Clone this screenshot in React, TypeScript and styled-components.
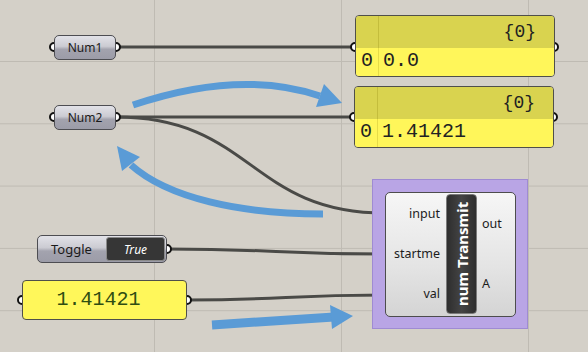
import React from 'react';
import styled, { createGlobalStyle } from 'styled-components';

const GlobalStyle = createGlobalStyle`
  html, body {
    margin: 0;
    padding: 0;
    background: #d4d0c8;
  }
  body {
    font-family: 'Noto Sans', 'Open Sans', sans-serif;
  }
`;

const Canvas = styled.div`
  position: relative;
  width: 588px;
  height: 352px;
  overflow: hidden;
  background-color: #d4d0c8;
  background-image:
    linear-gradient(to right, #bfbbb3 1px, transparent 1px),
    linear-gradient(to bottom, #bfbbb3 1px, transparent 1px);
  background-size: 187px 100%, 100% 62.3px;
  background-position: -33px 0, 0 -1.3px;
`;

const Layer = styled.svg`
  position: absolute;
  left: 0;
  top: 0;
`;

const Node = styled.div<{ $x: number; $y: number }>`
  position: absolute;
  left: ${({ $x }) => $x}px;
  top: ${({ $y }) => $y}px;
  box-sizing: border-box;
`;

const Param = styled.div`
  width: 62px;
  height: 25px;
  box-sizing: border-box;
  border: 1px solid #4d4d52;
  border-radius: 5px;
  background: linear-gradient(#e2e2e8 0%, #cbcbd2 45%, #a3a3ae 58%, #9c9ca8 100%);
  display: flex;
  align-items: center;
  justify-content: center;
  font-size: 12px;
  color: #1a1a1a;
`;

const Panel = styled.div`
  width: 200px;
  height: 62px;
  box-sizing: border-box;
  border: 1px solid #4f4f4a;
  border-radius: 4px;
  overflow: hidden;
  display: grid;
  grid-template-rows: 32px 1fr;
  grid-template-columns: 23px 1fr;
  font-family: 'Liberation Mono', 'Courier New', monospace;
  color: #222;
`;

const PanelHead = styled.div<{ $index?: boolean }>`
  background: #d9d34f;
  border-right: ${({ $index }) => ($index ? '1px solid #c4bd3c' : 'none')};
  display: flex;
  align-items: center;
  justify-content: flex-end;
  padding-right: 18px;
  font-size: 18px;
`;

const PanelCell = styled.div<{ $index?: boolean }>`
  background: #fff65a;
  border-right: ${({ $index }) => ($index ? '1px solid #e6dc48' : 'none')};
  display: flex;
  align-items: center;
  justify-content: ${({ $index }) => ($index ? 'center' : 'flex-start')};
  padding-left: ${({ $index }) => ($index ? '0' : '4px')};
  padding-bottom: 3px;
  font-size: 20px;
`;

const Toggle = styled.div`
  width: 130px;
  height: 28px;
  box-sizing: border-box;
  border: 1px solid #4d4d52;
  border-radius: 5px;
  background: linear-gradient(#e2e2e8 0%, #cbcbd2 45%, #a3a3ae 58%, #9c9ca8 100%);
  display: flex;
  align-items: center;
  padding: 1px;
  font-size: 13px;
  color: #1a1a1a;
`;

const ToggleLabel = styled.span`
  flex: 1;
  padding-left: 12px;
`;

const ToggleValue = styled.span`
  width: 59px;
  height: 24px;
  box-sizing: border-box;
  border: 1px solid #8a8a8a;
  border-radius: 3px;
  background: #363636;
  color: #ffffff;
  font-style: italic;
  font-size: 12px;
  display: flex;
  align-items: center;
  justify-content: center;
`;

const NumberBox = styled.div`
  width: 165px;
  height: 40px;
  box-sizing: border-box;
  border: 1px solid #4f4f4a;
  border-radius: 4px;
  background: #fff75a;
  display: flex;
  align-items: center;
  justify-content: center;
  padding-right: 12px;
  padding-bottom: 2px;
  font-family: 'Liberation Mono', 'Courier New', monospace;
  font-size: 20px;
  color: #2f4d12;
`;

const Group = styled.div`
  width: 156px;
  height: 150px;
  box-sizing: border-box;
  background: #b9a5e5;
  border: 1px solid #9f8bd3;
  padding: 12px 11px 11px 12px;
  display: flex;
`;

const Component = styled.div`
  flex: 1;
  box-sizing: border-box;
  border: 1px solid #4d4d4d;
  border-radius: 5px;
  background: linear-gradient(#f6f6f6 0%, #e4e4e4 60%, #d4d4d4 100%);
  display: flex;
  padding: 1px 0 2px;
  font-size: 12.5px;
  color: #1c1c1c;
`;

const PortColumn = styled.div<{ $side: 'in' | 'out' }>`
  display: flex;
  flex-direction: column;
  width: ${({ $side }) => ($side === 'in' ? '60px' : '38px')};
  align-items: ${({ $side }) => ($side === 'in' ? 'flex-end' : 'flex-start')};
  padding: ${({ $side }) => ($side === 'in' ? '0 6px 0 0' : '0 0 0 5px')};
  box-sizing: border-box;
`;

const PortLabel = styled.div`
  flex: 1;
  display: flex;
  align-items: center;
  padding-bottom: 2px;
`;

const NameBand = styled.div`
  width: 31px;
  box-sizing: border-box;
  border: 1px solid #7a7a7a;
  border-radius: 4px;
  background: linear-gradient(to right, #2e2e2e, #444 50%, #2e2e2e);
  color: #ffffff;
  font-weight: 700;
  font-size: 15px;
  display: flex;
  align-items: center;
  justify-content: center;
  writing-mode: vertical-rl;
  transform: rotate(180deg);
  white-space: nowrap;
`;

const wires = [
  'M116,47 C230,47 240,47 355,47',
  'M116,117 C230,117 240,117 354,117',
  'M116,117 C252,117 250,213 385,213',
  'M167,249 C276,249 276,254 385,254',
  'M187,300 C286,300 286,295 385,295',
];

const ports: [number, number][] = [
  [54, 47], [116, 47], [54, 117], [116, 117],
  [355, 47], [554, 47], [354, 117], [553, 117],
  [167, 249], [22, 300], [187, 300],
  [385, 213], [385, 254], [385, 295], [516, 223], [516, 285],
];

const Wires = () => (
  <Layer width={588} height={352}>
    {wires.map((d, i) => (
      <path key={i} d={d} fill="none" stroke="#4a4a47" strokeWidth={3} />
    ))}
    <g fill="#5a9bd6" stroke="none">
      <path d="M133,105 Q240,69 320,96" fill="none" stroke="#5a9bd6" strokeWidth={7} />
      <polygon points="342,103 324,84 316,107" />
      <path d="M323,214 C240,214 168,198 131,165" fill="none" stroke="#5a9bd6" strokeWidth={7} />
      <polygon points="117,146 122,171 140,157" />
      <path d="M212,325 L334,317" fill="none" stroke="#5a9bd6" strokeWidth={9} />
      <polygon points="353,316 330,305 332,329" />
    </g>
    {ports.map(([x, y], i) => (
      <circle key={i} cx={x} cy={y} r={4} fill="#ffffff" stroke="#111" strokeWidth={2} />
    ))}
  </Layer>
);

const DataPanel = ({ value }: { value: string }) => (
  <Panel>
    <PanelHead $index />
    <PanelHead>{'{0}'}</PanelHead>
    <PanelCell $index>0</PanelCell>
    <PanelCell>{value}</PanelCell>
  </Panel>
);

export default function App() {
  return (
    <>
      <GlobalStyle />
      <Canvas>
        <Wires />
        <Node $x={54} $y={35}>
          <Param>Num1</Param>
        </Node>
        <Node $x={54} $y={105}>
          <Param>Num2</Param>
        </Node>
        <Node $x={355} $y={15}>
          <DataPanel value="0.0" />
        </Node>
        <Node $x={354} $y={86}>
          <DataPanel value="1.41421" />
        </Node>
        <Node $x={37} $y={235}>
          <Toggle>
            <ToggleLabel>Toggle</ToggleLabel>
            <ToggleValue>True</ToggleValue>
          </Toggle>
        </Node>
        <Node $x={22} $y={280}>
          <NumberBox>1.41421</NumberBox>
        </Node>
        <Node $x={372} $y={179}>
          <Group>
            <Component>
              <PortColumn $side="in">
                <PortLabel>input</PortLabel>
                <PortLabel>startme</PortLabel>
                <PortLabel>val</PortLabel>
              </PortColumn>
              <NameBand>num Transmit</NameBand>
              <PortColumn $side="out">
                <PortLabel>out</PortLabel>
                <PortLabel>A</PortLabel>
              </PortColumn>
            </Component>
          </Group>
        </Node>
      </Canvas>
    </>
  );
}
